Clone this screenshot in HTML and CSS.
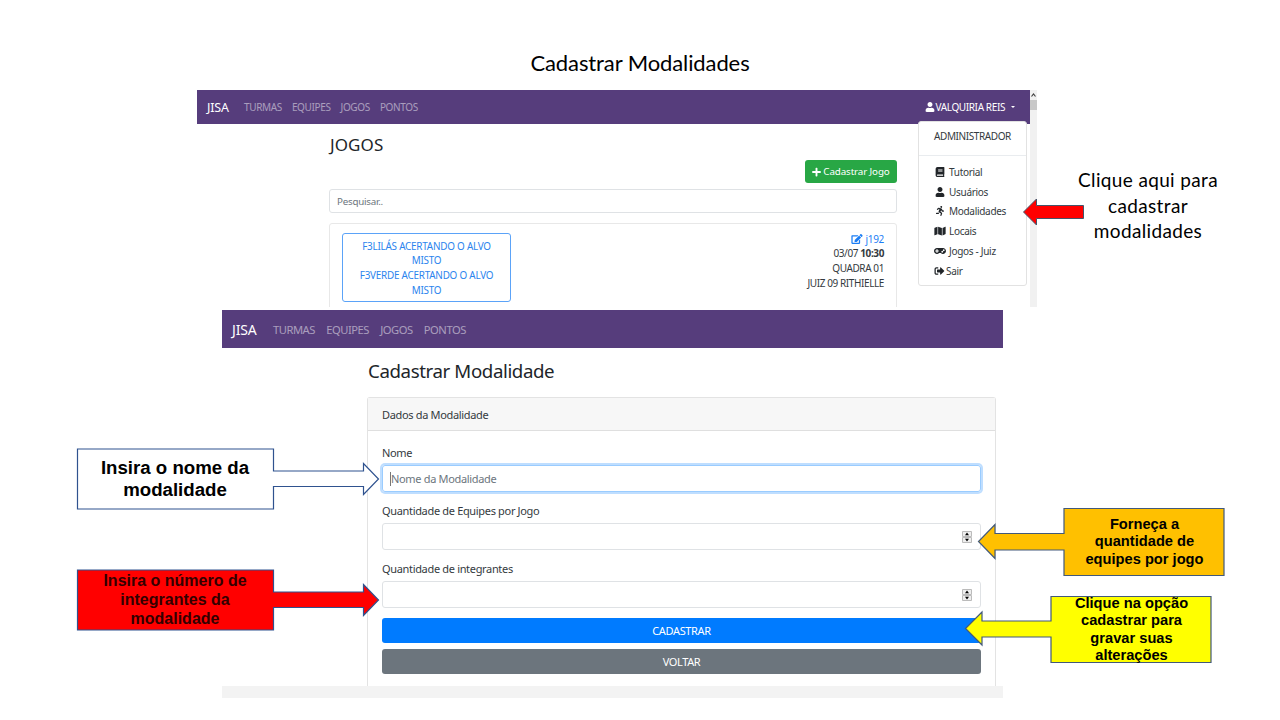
FILE: index.html
```html
<!DOCTYPE html>
<html lang="pt-BR">
<head>
<meta charset="utf-8">
<title>Cadastrar Modalidades</title>
<link rel="stylesheet" href="styles.css">
</head>
<body>
<svg class="sprite" aria-hidden="true">
<symbol id="user" viewBox="0 0 448 512"><path d="M224 256c70.7 0 128-57.3 128-128S294.7 0 224 0 96 57.3 96 128s57.3 128 128 128zm89.6 32h-16.7c-22.2 10.2-46.9 16-72.9 16s-50.6-5.8-72.9-16h-16.7C60.2 288 0 348.2 0 422.4V464c0 26.5 21.5 48 48 48h352c26.5 0 48-21.5 48-48v-41.6c0-74.2-60.2-134.4-134.4-134.4z"/></symbol>
<symbol id="book" viewBox="0 0 448 512"><path d="M448 360V24c0-13.300-10.700-24-24-24H96C43 0 0 43 0 96v320c0 53 43 96 96 96h328c13.300 0 24-10.700 24-24v-16c0-7.500-3.500-14.300-8.900-18.700-4.200-15.400-4.200-59.300 0-74.700 5.400-4.300 8.900-11.100 8.900-18.600zM128 134c0-3.300 2.700-6 6-6h212c3.300 0 6 2.700 6 6v20c0 3.300-2.700 6-6 6H134c-3.300 0-6-2.700-6-6v-20zm0 64c0-3.300 2.700-6 6-6h212c3.300 0 6 2.700 6 6v20c0 3.300-2.700 6-6 6H134c-3.300 0-6-2.700-6-6v-20zm253.400 250H96c-17.700 0-32-14.300-32-32 0-17.600 14.400-32 32-32h285.400c-1.900 17.100-1.900 46.900 0 64z"/></symbol>
<symbol id="plus" viewBox="0 0 448 512"><path d="M416 208H272V64c0-17.670-14.330-32-32-32h-32c-17.670 0-32 14.330-32 32v144H32c-17.670 0-32 14.330-32 32v32c0 17.670 14.330 32 32 32h144v144c0 17.670 14.330 32 32 32h32c17.670 0 32-14.330 32-32V304h144c17.670 0 32-14.330 32-32v-32c0-17.670-14.330-32-32-32z"/></symbol>
<symbol id="running" viewBox="0 0 416 512"><path d="M272 96c26.510 0 48-21.490 48-48S298.510 0 272 0s-48 21.490-48 48 21.490 48 48 48zM113.690 317.470l-14.800 34.520H32c-17.670 0-32 14.330-32 32s14.330 32 32 32h77.450c19.250 0 36.580-11.440 44.110-29.090l8.790-20.520-10.670-6.300c-17.320-10.230-30.060-25.370-37.990-42.610zM384 223.990h-44.030l-26.060-53.250c-12.500-25.550-35.450-44.230-61.780-50.940l-71.080-21.140c-28.300-6.800-57.770-.550-80.840 17.140l-39.670 30.410c-14.030 10.750-16.690 30.830-5.940 44.860s30.840 16.690 44.860 5.940l39.690-30.410c7.670-5.890 17.440-8 25.270-6.140l14.700 4.370-37.460 87.390c-12.620 29.480-1.310 64.010 26.300 80.310l84.980 50.170-27.470 87.730c-5.280 16.860 4.110 34.820 20.970 40.090 3.190 1 6.410 1.480 9.580 1.480 13.610 0 26.230-8.770 30.520-22.450l31.640-101.060c5.910-20.770-2.890-43.080-21.640-54.390l-61.240-36.140 31.310-78.280 20.270 41.430c8 16.340 24.920 26.890 43.110 26.890H384c17.670 0 32-14.330 32-32s-14.330-31.990-32-31.990z"/></symbol>
<symbol id="map" viewBox="0 0 576 512"><path d="M0 117.660v346.320c0 11.320 11.430 19.060 21.940 14.860L160 416V32L20.120 87.950A32 32 0 0 0 0 117.660zM192 416l192 64V96L192 32v384zM554.060 33.160L416 96v384l139.880-55.950A32 32 0 0 0 576 394.340V48.020c0-11.320-11.430-19.060-21.940-14.860z"/></symbol>
<symbol id="gamepad" viewBox="0 0 640 512"><path d="M480 96H160C71.600 96 0 167.600 0 256s71.600 160 160 160c44.800 0 85.200-18.400 114.200-48h91.500c29 29.600 69.500 48 114.200 48 88.400 0 160-71.600 160-160S568.400 96 480 96zM256 276c0 6.600-5.400 12-12 12h-52v52c0 6.600-5.400 12-12 12h-40c-6.600 0-12-5.400-12-12v-52H76c-6.600 0-12-5.400-12-12v-40c0-6.600 5.400-12 12-12h52v-52c0-6.600 5.400-12 12-12h40c6.600 0 12 5.400 12 12v52h52c6.600 0 12 5.400 12 12v40zm184 68c-26.500 0-48-21.500-48-48s21.500-48 48-48 48 21.500 48 48-21.500 48-48 48zm80-80c-26.500 0-48-21.500-48-48s21.500-48 48-48 48 21.500 48 48-21.500 48-48 48z"/></symbol>
<symbol id="signout" viewBox="0 0 512 512"><path d="M497 273L329 441c-15 15-41 4.500-41-17v-96H152c-13.300 0-24-10.700-24-24v-96c0-13.300 10.700-24 24-24h136V88c0-21.400 25.900-32 41-17l168 168c9.300 9.400 9.300 24.600 0 34zM192 436v-40c0-6.600-5.400-12-12-12H96c-17.700 0-32-14.300-32-32V160c0-17.700 14.300-32 32-32h84c6.600 0 12-5.400 12-12V76c0-6.600-5.400-12-12-12H96c-53 0-96 43-96 96v192c0 53 43 96 96 96h84c6.600 0 12-5.400 12-12z"/></symbol>
<symbol id="edit" viewBox="0 0 576 512"><path d="M402.600 83.200l90.200 90.200c3.800 3.800 3.800 10 0 13.800L274.400 405.600l-92.800 10.300c-12.400 1.400-22.900-9.100-21.500-21.500l10.300-92.800L388.800 83.200c3.800-3.800 10-3.800 13.800 0zm162-22.900l-48.800-48.800c-15.200-15.200-39.900-15.200-55.200 0l-35.400 35.400c-3.800 3.800-3.800 10 0 13.800l90.200 90.200c3.800 3.800 10 3.800 13.800 0l35.400-35.400c15.200-15.300 15.200-40 0-55.200zM384 346.200V448H64V128h229.800c3.200 0 6.200-1.300 8.500-3.500l40-40c7.600-7.600 2.200-20.500-8.500-20.500H48C21.500 64 0 85.500 0 112v352c0 26.500 21.500 48 48 48h352c26.500 0 48-21.500 48-48V306.200c0-10.700-12.900-16-20.500-8.500l-40 40c-2.200 2.300-3.500 5.300-3.500 8.500z"/></symbol>
</svg>

<main class="slide">
  <h1 class="slide-title">Cadastrar Modalidades</h1>

  <section class="games">
    <div class="games-page">
      <nav class="navbar">
        <span class="brand">JISA</span>
        <span class="link">TURMAS</span><span class="link">EQUIPES</span><span class="link">JOGOS</span><span class="link">PONTOS</span>
        <span class="account"><svg class="icon"><use href="#user"/></svg><span>VALQUIRIA REIS</span><i class="caret"></i></span>
      </nav>
      <div class="games-body">
        <h2 class="games-title">JOGOS</h2>
        <div class="toolbar"><button class="btn-add"><svg class="icon"><use href="#plus"/></svg><span>Cadastrar Jogo</span></button></div>
        <div class="search">Pesquisar..</div>
        <div class="game">
          <div class="teams">F3LILÁS ACERTANDO O ALVO<br>MISTO<br>F3VERDE ACERTANDO O ALVO<br>MISTO</div>
          <div class="info">
            <div class="code"><svg class="icon"><use href="#edit"/></svg><span>j192</span></div>
            <div>03/07 <b>10:30</b></div>
            <div>QUADRA 01</div>
            <div class="judge">JUIZ 09 RITHIELLE</div>
          </div>
        </div>
      </div>
      <div class="menu">
        <div class="menu-head">ADMINISTRADOR</div>
        <div class="menu-list">
          <div class="item"><svg class="icon"><use href="#book"/></svg><span>Tutorial</span></div>
          <div class="item"><svg class="icon"><use href="#user"/></svg><span>Usuários</span></div>
          <div class="item"><svg class="icon"><use href="#running"/></svg><span>Modalidades</span></div>
          <div class="item"><svg class="icon"><use href="#map"/></svg><span>Locais</span></div>
          <div class="item"><svg class="icon"><use href="#gamepad"/></svg><span>Jogos - Juiz</span></div>
          <div class="item exit"><svg class="icon"><use href="#signout"/></svg><span>Sair</span></div>
        </div>
      </div>
    </div>
    <div class="scrollbar"><svg class="up" viewBox="0 0 7 10"><path d="M1.500 6.500l2-2.500 2 2.500" fill="none" stroke="#444" stroke-width="1.200"/></svg><i class="thumb"></i></div>
  </section>

  <section class="register">
    <nav class="navbar large">
      <span class="brand">JISA</span>
      <span class="link">TURMAS</span><span class="link">EQUIPES</span><span class="link">JOGOS</span><span class="link">PONTOS</span>
    </nav>
    <div class="register-body">
      <h2 class="register-title">Cadastrar Modalidade</h2>
      <div class="card">
        <div class="card-head">Dados da Modalidade</div>
        <div class="form">
          <label>Nome</label>
          <div class="field focus"><i class="cursor"></i>Nome da Modalidade</div>
          <label>Quantidade de Equipes por Jogo</label>
          <div class="field number"><svg class="spin" viewBox="0 0 10 12"><path d="M.5.500h9v5h-9zM.5 6.500h9v5h-9z" fill="#eee" stroke="#bbb"/><path d="M3 4.200l2-2.600 2 2.600zM3 7.800l2 2.600 2-2.600z"/></svg></div>
          <label>Quantidade de integrantes</label>
          <div class="field number"><svg class="spin" viewBox="0 0 10 12"><path d="M.5.500h9v5h-9zM.5 6.500h9v5h-9z" fill="#eee" stroke="#bbb"/><path d="M3 4.200l2-2.600 2 2.600zM3 7.800l2 2.600 2-2.600z"/></svg></div>
          <button class="btn primary">CADASTRAR</button>
          <button class="btn secondary">VOLTAR</button>
        </div>
      </div>
    </div>
    <div class="footer"></div>
  </section>

  <div class="note">Clique aqui para<br>cadastrar<br>modalidades</div>
  <svg class="arrow" viewBox="0 0 64 30"><path d="M1.500 15L14.500 2v6.500h47v13h-47V28z"/></svg>

  <div class="callout name">
    <svg viewBox="0 0 304 62"><path d="M1.500 1h196v22h90V15.500l15 15.500-15 15.500V38.500h-90V61h-196z"/></svg>
    <p>Insira o nome da<br>modalidade</p>
  </div>
  <div class="callout members">
    <svg viewBox="0 0 304 62"><path d="M1.500 1h196v22h90V15.500l15 15.500-15 15.500V38.500h-90V61h-196z"/></svg>
    <p>Insira o número de<br>integrantes da<br>modalidade</p>
  </div>
  <div class="callout teams-count">
    <svg viewBox="0 0 248 70"><path d="M247 1.500H87v25H18V17.500L1.500 34.500 18 51.500V43h69v25.500h160z"/></svg>
    <p>Forneça a<br>quantidade de<br>equipes por jogo</p>
  </div>
  <div class="callout submit">
    <svg viewBox="0 0 248 70"><path d="M247 2.500H87V27H18V18L1.500 34.500 18 51V43h69v25.500h160z"/></svg>
    <p>Clique na opção<br>cadastrar para<br>gravar suas<br>alterações</p>
  </div>
</main>
</body>
</html>
```
FILE: styles.css
```css
* { box-sizing: border-box; }
body { margin: 0; background: #fff; color: #343a40; font-family: "Noto Sans", sans-serif; }
h1, h2, p { margin: 0; font-weight: 400; }
button { border: 0; font-family: inherit; color: #fff; padding: 0; }
.sprite { display: none; }
.icon { fill: currentColor; flex: none; height: 10px; width: 12px; }

.slide { position: relative; width: 1280px; height: 720px; overflow: hidden; display: flex; flex-direction: column; }
.slide-title { height: 90px; padding-top: 48px; line-height: 30px; text-align: center; color: #000; font-family: Lato, sans-serif; font-size: 22px; letter-spacing: -.1px; }

.navbar { display: flex; align-items: center; height: 34px; padding-left: 10px; background: #563d7c; color: #fff; white-space: nowrap; }
.brand { font-size: 12.500px; letter-spacing: -.15px; width: 37px; }
.link { font-size: 10px; letter-spacing: -.36px; margin-right: 10px; color: rgba(255, 255, 255, .5); }
.large { height: 38px; }
.large .brand { font-size: 14px; width: 41px; }
.large .link { font-size: 11.200px; letter-spacing: -.47px; margin-right: 11.200px; }

.games { display: flex; width: 840px; height: 217px; margin-left: 197px; overflow: hidden; }
.games-page { position: relative; width: 833px; }
.account { display: flex; align-items: center; margin-left: auto; margin-right: 15px; font-size: 10px; letter-spacing: -.38px; }
.account .icon { width: 10px; height: 10px; margin-right: 1px; }
.caret { margin-left: 6px; border: 2.500px solid transparent; border-top-color: #fff; border-bottom: 0; }
.games-body { width: 568px; margin-left: 132px; }
.games-title { height: 36px; padding-top: 9px; padding-left: 1px; line-height: 24px; font-size: 17px; letter-spacing: .1px; color: #212529; }
.toolbar { display: flex; justify-content: flex-end; }
.btn-add { display: flex; align-items: center; justify-content: center; width: 92px; height: 23px; background: #28a745; border-radius: 3px; font-size: 9.800px; letter-spacing: -.12px; white-space: nowrap; }
.btn-add .icon { width: 9px; margin-right: 2px; }
.search { height: 24px; margin-top: 6px; padding-left: 7px; line-height: 23px; border: 1px solid #dfe2e5; border-radius: 3px; color: #6c757d; font-size: 9.800px; letter-spacing: -.25px; }
.game { display: flex; justify-content: space-between; height: 110px; margin-top: 10px; padding: 9px 12px; border: 1px solid #e8e8e8; border-radius: 3px; }
.teams { width: 169px; height: 69px; padding-top: 4.500px; border: 1px solid #5ba3f8; border-radius: 3px; color: #2b84ee; text-align: center; font-size: 9.900px; line-height: 14.900px; letter-spacing: -.22px; white-space: nowrap; }
.info { text-align: right; font-size: 10px; line-height: 14.900px; letter-spacing: -.4px; }
.code { display: flex; align-items: center; justify-content: flex-end; gap: 2px; height: 12px; margin-bottom: 1px; color: #1a7df5; letter-spacing: -.3px; }
.menu { position: absolute; left: 721px; top: 31px; width: 109px; height: 165px; background: #fff; border: 1px solid #e2e2e2; border-radius: 3px; font-size: 10px; }
.menu-head { height: 34px; line-height: 29px; padding-left: 15px; border-bottom: 1px solid #e9ecef; letter-spacing: -.4px; }
.menu-list { padding: 6px 0 0 15px; }
.item { display: flex; align-items: center; gap: 3px; height: 19.800px; letter-spacing: -.3px; }
.item .icon { color: #212529; }
.exit { gap: 1px; }
.exit .icon { width: 11px; }
.scrollbar { width: 7px; background: #f1f1f1; }
.up { display: block; width: 7px; height: 10px; }
.thumb { display: block; height: 10px; background: #c8c8c8; }

.register { width: 781px; height: 388px; margin: 3px 0 0 222px; display: flex; flex-direction: column; }
.register-body { width: 629px; height: 338px; margin-left: 145px; }
.register-title { height: 49px; padding-top: 9px; padding-left: 1px; line-height: 28px; font-size: 18.700px; letter-spacing: -.4px; color: #212529; }
.card { height: 289px; border: 1px solid #e3e3e3; border-bottom: 0; border-radius: 3px 3px 0 0; font-size: 11px; letter-spacing: -.33px; }
.card-head { height: 33px; line-height: 33px; padding-left: 14px; background: #f7f7f7; border-bottom: 1px solid #dfdfdf; }
.form { display: flex; flex-direction: column; padding: 14px 14px 0 14px; width: 627px; }
.form label { height: 20px; line-height: 16px; }
.field { position: relative; height: 27px; padding-left: 8px; line-height: 26px; border: 1px solid #dfe2e5; border-radius: 3px; color: #6c757d; margin-bottom: 11px; }
.focus { border-color: #9accff; box-shadow: 0 0 0 2px #bfdeff; }
.cursor { position: absolute; left: 7px; top: 6px; width: 1px; height: 14px; background: #777; }
.number { display: flex; align-items: center; justify-content: flex-end; padding-right: 8px; }
.spin { width: 10px; height: 12px; }
.btn { height: 25px; margin-bottom: 6px; border-radius: 3px; font-size: 11px; letter-spacing: -.35px; }
.primary { background: #007bff; margin-top: -1px; }
.secondary { background: #6c757d; }
.footer { height: 12px; background: #f3f3f3; }

.note { position: absolute; left: 1058px; top: 167px; width: 180px; text-align: center; color: #000; font-family: Lato, sans-serif; font-size: 19px; line-height: 25.500px; letter-spacing: .35px; }
.arrow { position: absolute; left: 1022px; top: 197px; width: 64px; height: 30px; }
.arrow path { fill: #f00; stroke: #44546a; }
.callout { position: absolute; color: #000; font-family: "Liberation Sans", sans-serif; font-weight: 700; text-align: center; white-space: nowrap; }
.callout svg { display: block; width: 100%; height: 100%; }
.callout path { fill: #fff; stroke: #2f528f; stroke-width: 1.200; }
.callout p { position: absolute; font-weight: 700; }
.name { left: 76px; top: 447.500px; width: 304px; height: 62px; }
.name p { left: 0; width: 198px; top: 9px; font-size: 18.670px; line-height: 22px; }
.members { left: 76px; top: 568.500px; width: 304px; height: 62px; }
.members p { left: 0; width: 198px; top: 2px; font-size: 16px; line-height: 19px; color: #300; }
.members path { fill: #f00; }
.teams-count { left: 977px; top: 507px; width: 248px; height: 70px; }
.teams-count path { fill: #ffc000; stroke: #42597a; }
.submit { left: 964px; top: 594px; width: 248px; height: 70px; }
.submit path { fill: #ff0; stroke: #42597a; }
.teams-count p, .submit p { left: 87px; width: 161px; font-size: 14.670px; line-height: 17.600px; }
.teams-count p { top: 8.500px; }
.submit p { top: .5px; }
```
